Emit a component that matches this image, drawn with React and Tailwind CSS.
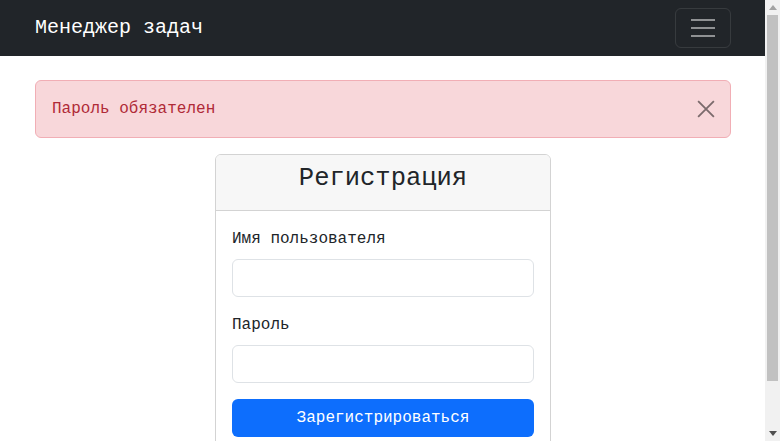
import React from "react";

const mono = { fontFamily: '"Liberation Mono", "DejaVu Sans Mono", monospace' };

const Navbar = () => (
  <nav className="h-[56px] shrink-0 bg-[#212529] flex items-center justify-between pl-[35px] pr-[34px]">
    <span className="text-[20px] leading-[30px] text-white">Менеджер задач</span>
    <button className="w-[56px] h-[40px] border border-[rgba(255,255,255,0.1)] rounded-[6px] flex flex-col items-center justify-center gap-[6px]">
      <span className="block w-[24px] h-[2px] bg-[#8f9193]" />
      <span className="block w-[24px] h-[2px] bg-[#8f9193]" />
      <span className="block w-[24px] h-[2px] bg-[#8f9193]" />
    </button>
  </nav>
);

const Alert = () => (
  <div className="relative mt-6 mb-4 border border-[#f1aeb5] bg-[#f8d7da] rounded-[6px] px-4 py-4 pr-12 text-[#b02a37] text-[16px] leading-[24px]">
    Пароль обязателен
    <button className="absolute right-[14px] top-[18px] w-[20px] h-[20px] flex items-center justify-center opacity-50">
      <svg width="18" height="18" viewBox="0 0 16 16">
        <path d="M1 1 L15 15 M15 1 L1 15" stroke="#000" strokeWidth="1.6" fill="none" />
      </svg>
    </button>
  </div>
);

const Field = ({ label, type = "text" }) => (
  <div className="mb-4">
    <label className="block mb-2 text-[16px] leading-[24px] text-[#212529]">{label}</label>
    <input
      type={type}
      className="block w-full h-[38px] border border-[#dee2e6] rounded-[6px] bg-white px-3 outline-none"
    />
  </div>
);

// fake classic scrollbar, the reference shows one on the right edge
const Scrollbar = () => (
  <div className="w-[15px] shrink-0 h-full bg-[#f1f1f1] flex flex-col items-center">
    <div className="h-[15px] flex items-center justify-center">
      <svg width="8" height="5" viewBox="0 0 8 5">
        <path d="M0 5 L4 0 L8 5 Z" fill="#a3a3a3" />
      </svg>
    </div>
    <div className="w-[11px] h-[366px] bg-[#c1c1c1]" />
    <div className="flex-1" />
    <div className="h-[15px] flex items-center justify-center">
      <svg width="8" height="5" viewBox="0 0 8 5">
        <path d="M0 0 L8 0 L4 5 Z" fill="#505050" />
      </svg>
    </div>
  </div>
);

export default function App() {
  return (
    <div style={mono} className="h-[441px] w-[780px] overflow-hidden flex bg-white text-[#212529]">
      <div className="flex-1 min-w-0 flex flex-col">
        <Navbar />
        <div className="pl-[35px] pr-[34px]">
          <Alert />
          <div className="flex justify-center">
            <div className="w-[336px] border border-[#d3d3d3] rounded-[6px] overflow-hidden">
              <div className="bg-[#f7f7f7] border-b border-[#d3d3d3] pt-2 pb-2 text-center">
                <h3 className="text-[25.5px] leading-[31px] mb-2 text-[#212529]">Регистрация</h3>
              </div>
              <div className="p-4">
                <Field label="Имя пользователя" />
                <Field label="Пароль" type="password" />
                <button className="w-full h-[38px] bg-[#0d6efd] rounded-[6px] text-white text-[16px] leading-[24px]">
                  Зарегистрироваться
                </button>
              </div>
            </div>
          </div>
        </div>
      </div>
      <Scrollbar />
    </div>
  );
}
